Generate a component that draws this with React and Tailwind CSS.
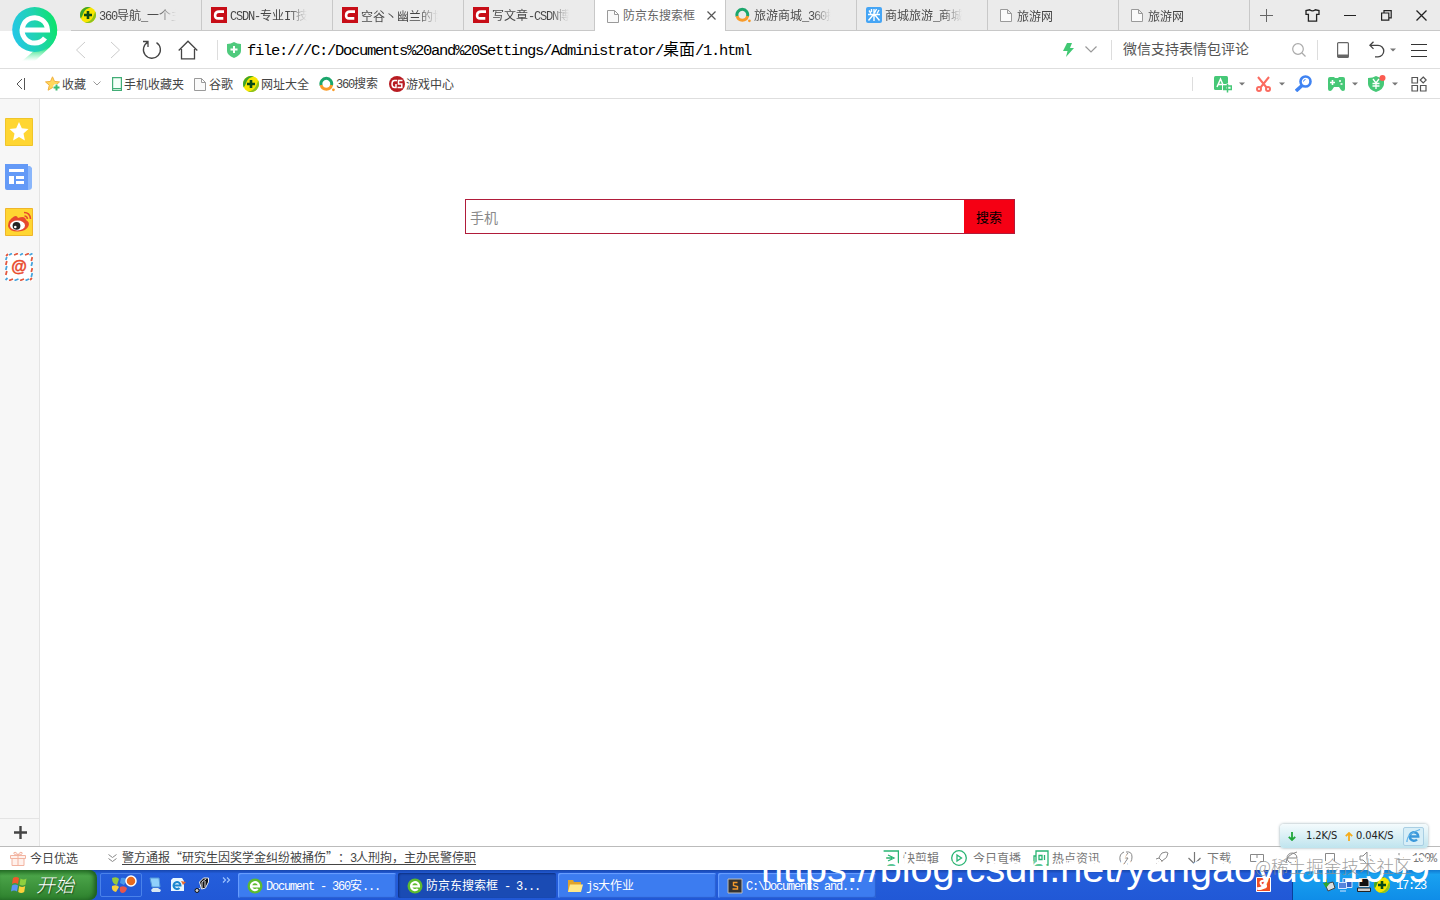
const CJK = "font-['Noto_Sans_CJK_SC','Liberation_Sans',sans-serif]";

// Chinese runs stay full width, Latin runs are tightened to half of a Chinese glyph.
function Text({ children, className = '', wide = false }) {
  const latin = wide
    ? "font-['Liberation_Mono',monospace] text-[15.5px] tracking-[-1.3px]"
    : "font-['Liberation_Mono',monospace] text-[12px] tracking-[-1.2px]";
  return (
    <span className={`whitespace-pre [text-spacing-trim:space-all] ${className}`}>
      {children.split(/([\x20-\x7e]+)/).map((part, i) =>
        i % 2 ? (
          <span key={i} className={latin}>
            {part}
          </span>
        ) : (
          part
        )
      )}
    </span>
  );
}

function Icon({ w = 16, h = 16, className = '', stroke = 'none', sw = 1, fill = 'none', children }) {
  return (
    <svg
      width={w}
      height={h}
      viewBox={`0 0 ${w} ${h}`}
      fill={fill}
      stroke={stroke}
      strokeWidth={sw}
      className={`block shrink-0 ${className}`}
    >
      {children}
    </svg>
  );
}

function NavIcon({ className }) {
  return (
    <Icon className={className}>
      <circle cx="8" cy="8" r="8" fill="#f7e600" />
      <path d="M0 8A8 8 0 0 1 11 .6Q5 1.500 3.500 6 2.500 9 .8 11.500 0 10 0 8z" fill="#3da52a" />
      <path d="M15.200 4.600A8 8 0 0 1 5 15.400Q10.500 15 12.800 10.500 14 8 15.200 4.600z" fill="#8cc21f" />
      <path d="M8 4v8M4 8h8" stroke="#0a4a18" strokeWidth="2.600" />
    </Icon>
  );
}

function CsdnIcon() {
  return (
    <Icon>
      <path d="M0 0h16v16H0z" fill="#c70d17" />
      <path d="M13 4.600H8Q4.400 4.600 4.100 8q-.2 3.400 3 3.400h5.200" stroke="#fff" strokeWidth="2.600" />
    </Icon>
  );
}

function PageIcon({ className }) {
  return (
    <Icon w={12} h={14} stroke="#9a9a9a" className={className}>
      <path d="M.5 1.500h7l4 4v8H.5zM7.500 1.500v4h4" fill="#fafafa" />
    </Icon>
  );
}

function RingIcon({ className }) {
  return (
    <Icon className={className} sw={3}>
      <path d="M2.200 9.500A5.400 5.400 0 1 1 12.400 9.500" stroke="#1ba66c" />
      <path d="M2.100 9A5.400 5.400 0 0 0 12.600 9" stroke="#f99b2a" />
      <circle cx="14.400" cy="13.800" r="1.400" fill="#f99b2a" />
    </Icon>
  );
}

function MiIcon() {
  return (
    <Icon>
      <rect width="16" height="16" rx="2" fill="#45a5f5" />
      <path d="M3 3.500l2 3M10.500 2l-2 4M8 2v12M2 7.500h12M7 8l-4.500 5.500M9 8l4.500 5.500M5.500 2v3M13 3l-2 3.500" stroke="#fff" strokeWidth="1.400" />
    </Icon>
  );
}

function BrowserE({ className }) {
  return (
    <Icon className={className}>
      <circle cx="8" cy="8" r="7.500" fill="#5dbb2f" />
      <path d="M3.800 8.400h8.200A4 4 0 1 0 10.800 11" stroke="#fff" strokeWidth="2.200" />
    </Icon>
  );
}

function Caret({ className }) {
  return (
    <Icon w={6} h={4} className={className}>
      <path d="M0 .5h6L3 3.500z" fill="#777" />
    </Icon>
  );
}

const TABS = [
  { title: '360导航_一个主页', icon: <NavIcon /> },
  { title: 'CSDN-专业IT技术', icon: <CsdnIcon /> },
  { title: '空谷丶幽兰的博', icon: <CsdnIcon /> },
  { title: '写文章-CSDN博客', icon: <CsdnIcon /> },
  { title: '防京东搜索框', icon: <PageIcon className="mr-px ml-[3px]" />, active: true },
  { title: '旅游商城_360搜', icon: <RingIcon /> },
  { title: '商城旅游_商城', icon: <MiIcon /> },
  { title: '旅游网', icon: <PageIcon className="mr-[2px] ml-[3px]" /> },
  { title: '旅游网', icon: <PageIcon className="mr-[2px] ml-[3px]" /> },
];

function TabBar() {
  return (
    <div className="flex h-[31px] bg-[#ebebeb] pl-[71px]">
      {TABS.map((tab, i) => (
        <div
          key={i}
          className={`flex h-[31px] w-[131px] shrink-0 items-center border-r border-r-[#c8c8c8] pl-[9px] ${
            tab.active ? 'bg-white' : 'border-b border-b-[#c8c8c8]'
          }`}
        >
          {tab.icon}
          <Text
            className={`ml-[3px] overflow-hidden text-[12px] leading-[18px] ${
              tab.active
                ? 'mb-px w-[74px] text-[#666]'
                : 'mt-px w-[77px] bg-linear-to-r from-[#444] from-75% to-transparent bg-clip-text text-transparent'
            }`}
          >
            {tab.title}
          </Text>
          {tab.active && (
            <Icon w={9} h={9} stroke="#555" sw={1.2} className="ml-[10px]">
              <path d="M.5.5l8 8M8.500.5l-8 8" />
            </Icon>
          )}
        </div>
      ))}
      <div className="flex grow items-center border-b border-[#c8c8c8]">
        <div className="flex w-[43px] pl-[10px]">
          <Icon w={13} h={13} stroke="#666">
            <path d="M6.500 0v13M0 6.500h13" />
          </Icon>
        </div>
        <div className="flex grow items-center justify-between pr-[13px]">
          <Icon w={15} h={13} stroke="#222" sw={1.3} className="ml-3">
            <path d="M4.700.8Q7.500 3 10.300.8L14 1.600v3.800h-2.400v6.800H3.400V5.400H1V1.600z" />
          </Icon>
          <Icon w={12} h={12} stroke="#222">
            <path d="M0 6.500h12" />
          </Icon>
          <Icon w={11} h={11} stroke="#222" sw={1.2}>
            <path d="M.6 3h7.200v7.200H.6zM3 3V.6h7.200v7.200H7.800" />
          </Icon>
          <Icon w={11} h={11} stroke="#222" sw={1.3}>
            <path d="M.5.5l10 10M10.500.5l-10 10" />
          </Icon>
        </div>
      </div>
    </div>
  );
}

function Logo() {
  return (
    <Icon w={46} h={56} className="absolute top-[6px] left-[12px]">
      <defs>
        <linearGradient id="logo" x1="0" y1="0.7" x2="1" y2="0.5">
          <stop offset="0" stopColor="#25c6ea" />
          <stop offset="0.55" stopColor="#20d3b0" />
          <stop offset="1" stopColor="#0ce36c" />
        </linearGradient>
        <linearGradient id="tail" x1="0" y1="0" x2="0" y2="1">
          <stop offset="0.55" stopColor="#12df75" />
          <stop offset="1" stopColor="#4be89a" stopOpacity="0" />
        </linearGradient>
      </defs>
      <path d="M45.200 24Q45 34 38 41L23 55H10L23 44 20 24Z" fill="url(#tail)" />
      <circle cx="22.700" cy="23.500" r="22.500" fill="url(#logo)" />
      <path d="M11 24h24.500A12.700 12.700 0 1 0 33 32" stroke="#fff" strokeWidth="5" />
    </Icon>
  );
}

function AddressBar() {
  return (
    <div className="flex h-[38px] items-center border-b border-[#dedede] bg-white">
      <Icon w={11} h={18} stroke="#ccc" className="ml-[75px]">
        <path d="M10 1L1.500 9 10 17" />
      </Icon>
      <Icon w={11} h={18} stroke="#ccc" className="ml-6">
        <path d="M1 1l8.500 8L1 17" />
      </Icon>
      <Icon w={20} h={20} stroke="#444" sw={1.3} className="ml-[21px]">
        <path d="M14.500 2.600A8.500 8.500 0 1 1 6 2.200M6 7V1.500H1" />
      </Icon>
      <Icon w={20} h={20} stroke="#444" sw={1.3} className="ml-[16px]">
        <path d="M.7 10.500L10 1.200l9.300 9.300M3.500 9v9.800h13V9" />
      </Icon>
      <div className="ml-[19px] h-5 w-px bg-[#ddd]" />
      <Icon w={14} h={16} className="ml-[9px]">
        <path d="M0 2Q4 2 7 0q3 2 7 2v7q0 4-7 7-7-3-7-7z" fill="#4fca7d" />
        <path d="M7 4v7M3.500 7.500h7" stroke="#fff" strokeWidth="2" />
      </Icon>
      <Text wide className="-mt-px ml-[6px] text-[16px] leading-6 text-black">
        file:///C:/Documents%20and%20Settings/Administrator/桌面/1.html
      </Text>
      <div className="grow" />
      <Icon w={11} h={14}>
        <path d="M4 0h5L7 5h4L3 14l1.500-6H0z" fill="#41c873" />
      </Icon>
      <Icon w={12} h={7} stroke="#999" sw={1.2} className="ml-[11px]">
        <path d="M.5.5L6 6 11.500.5" />
      </Icon>
      <div className="ml-[14px] h-5 w-px bg-[#ddd]" />
      <Text className="-mt-[3px] ml-[11px] text-[14px] leading-5 text-[#555]">微信支持表情包评论</Text>
      <Icon w={14} h={14} stroke="#aaa" sw={1.2} className="ml-[43px]">
        <path d="M10 10l3.500 3.500" />
        <circle cx="6" cy="6" r="5.300" />
      </Icon>
      <div className="ml-[11px] h-5 w-px bg-[#ddd]" />
      <Icon w={12} h={16} stroke="#666" sw={1.2} className="ml-[19px]">
        <rect x=".6" y=".6" width="10.800" height="14.800" rx="1" />
        <path d="M1 14h10" strokeWidth="3" />
      </Icon>
      <Icon w={16} h={17} stroke="#444" sw={1.3} className="ml-5">
        <path d="M4.500.7L.9 4.300l3.600 3.600M1 4.300h8a5.700 5.700 0 0 1 0 11.500H6" />
      </Icon>
      <Caret className="ml-[5px]" />
      <Icon w={16} h={14} stroke="#333" className="mr-[13px] ml-[15px]">
        <path d="M0 1.500h16M0 7.500h16M0 13.500h16" />
      </Icon>
    </div>
  );
}

function Bookmarks() {
  return (
    <div className="flex h-[30px] items-center border-b border-[#dedede] bg-white text-[12px] leading-[18px] text-[#444]">
      <Icon w={10} h={12} stroke="#555" className="ml-4">
        <path d="M6 1L1 6l5 5M8.500 0v12" />
      </Icon>
      <Icon w={16} h={16} className="ml-[19px]">
        <path d="M7.500.8l2 4.600 5 .5-3.800 3.300 1.200 5-4.400-2.600-4.400 2.600 1.200-5L.5 5.900l5-.5z" fill="#ffd75c" stroke="#f0b040" />
        <path d="M11.500 8v7M8 11.500h7" stroke="#fff" strokeWidth="4" />
        <path d="M11.500 8.500v6M8.500 11.500h6" stroke="#3cba70" strokeWidth="2" />
      </Icon>
      <Text className="ml-px">收藏</Text>
      <Icon w={8} h={5} stroke="#999" className="ml-[7px]">
        <path d="M.5.5L4 4 7.500.5" />
      </Icon>
      <Icon w={10} h={14} stroke="#42ad76" sw={1.2} className="ml-[11px]">
        <path d="M.6.6h8.800v12.800H.6zM1 11.500h8" fill="#f5fff9" />
      </Icon>
      <Text className="ml-[2px]">手机收藏夹</Text>
      <PageIcon className="ml-[10px]" />
      <Text className="ml-[3px]">谷歌</Text>
      <NavIcon className="ml-[10px]" />
      <Text className="ml-[2px]">网址大全</Text>
      <RingIcon className="ml-[10px]" />
      <Text className="ml-px">360搜索</Text>
      <Icon className="ml-[11px]">
        <circle cx="8" cy="8" r="8" fill="#b81c22" />
        <path d="M8 4.500H5.500Q3 4.500 3 8t2.500 3.500H7V8M13.500 4.500H9.500V8h3.300v3.500H8.500" stroke="#fff" strokeWidth="1.500" />
      </Icon>
      <Text className="ml-px">游戏中心</Text>
      <div className="grow" />
      <div className="h-[14px] w-px bg-[#ddd]" />
      <Icon w={18} h={18} className="ml-[21px]">
        <rect y="1" width="14" height="14" rx="1.500" fill="#46c877" />
        <path d="M3 12L6.500 4 10 12M4.500 9.500h4" stroke="#fff" strokeWidth="1.500" />
        <path d="M9 10h9v5H9zM13.500 8.500v9" stroke="#fff" strokeWidth="2" />
        <path d="M9.700 11h7.600v3.500H9.700zM13.500 9v8.500" stroke="#46c877" strokeWidth="1.500" />
      </Icon>
      <Caret className="ml-[7px]" />
      <Icon w={15} h={16} stroke="#fb6b60" sw={2} className="ml-[11px]">
        <path d="M2 1l8.500 10.500M13 1L4.500 11.500" />
        <circle cx="3" cy="13" r="2" />
        <circle cx="12" cy="13" r="2" />
      </Icon>
      <Caret className="ml-2" />
      <Icon w={17} h={17} stroke="#3f83f2" sw={2.6} className="ml-[10px]">
        <circle cx="10.500" cy="6.500" r="5" />
        <path d="M7 10.500L1 16" strokeWidth="3.500" />
        <path d="M8.500 6.500q.3-2 2-2" strokeWidth="1" />
      </Icon>
      <Icon w={17} h={14} className="ml-4">
        <path d="M2 0h4l1 1h3l1-1h4q2 0 2 2v10q0 2-2 2-1 0-2-1l-2-3H6l-2 3q-1 1-2 1-2 0-2-2V2q0-2 2-2z" fill="#46c877" />
        <path d="M4.500 3v5M2 5.500h5M11 4h2M12.500 7h2" stroke="#fff" strokeWidth="1.600" />
      </Icon>
      <Caret className="ml-[7px]" />
      <Icon w={18} h={18} className="ml-[10px]">
        <path d="M0 3q5 0 8-2 3 2 8 2v6q0 5-8 8-8-3-8-8z" fill="#46c877" />
        <path d="M5 4l3 4 3-4M8 8v6M4.500 8.500h7M4.500 11h7" stroke="#fff" strokeWidth="1.300" />
        <circle cx="14.500" cy="3" r="3" fill="#fb5b50" />
      </Icon>
      <Caret className="ml-[6px]" />
      <Icon w={16} h={16} stroke="#555" sw={1.2} className="mr-[13px] ml-[13px]">
        <path d="M1 1.500h5.500V7H1zM1 9.500h5.500V15H1zM9.500 9.500H15V15H9.500z" />
        <path d="M12.200 1l3 3-3 3-3-3z" />
      </Icon>
    </div>
  );
}

function Sidebar() {
  return (
    <div className="flex w-10 shrink-0 flex-col border-r border-[#e4e4e4] bg-[#f7f7f7]">
      <div className="flex grow flex-col gap-[17px] pt-[19px] pl-[5px]">
        <Icon w={28} h={28}>
          <path d="M.5.5h27v27H.5z" fill="#ffd632" stroke="#efc52b" />
          <path d="M14 4l2.800 6.300 6.700.7-5 4.600 1.400 6.800L14 19l-5.900 3.400 1.400-6.800-5-4.600 6.700-.7z" fill="#fff" />
        </Icon>
        <Icon w={28} h={28}>
          <path d="M21 3h4l2 2v19q0 3-4 3h-6z" fill="#8ab6fb" />
          <path d="M0 1h23v26H2q-2 0-2-2z" fill="#649af7" />
          <path d="M4 7.500h15M11 14.500h8M11 19.500h8" stroke="#fff" strokeWidth="3" />
          <path d="M4 13h5v8H4z" fill="#fff" />
        </Icon>
        <Icon w={28} h={28}>
          <path d="M.5.5h27v27H.5z" fill="#ffd632" stroke="#efb52b" />
          <path d="M3 18Q3 12 9 8.500q3-1.500 4 1.500 7-3 8 2 4 2 2.500 6-2 5-10.500 5.500Q4 23.500 3 18z" fill="#e6492d" />
          <ellipse cx="12.500" cy="17.500" rx="7.500" ry="5" fill="#fff" />
          <circle cx="11.500" cy="17.800" r="3.900" fill="#222" />
          <circle cx="10.300" cy="19" r="1.300" fill="#fff" />
          <path d="M19 4.500q6 0 6.500 6.500M19.500 8q2.500 0 3 3" stroke="#e6492d" strokeWidth="1.600" />
        </Icon>
        <Icon w={28} h={28}>
          <path d="M0 0h28v28H0z" fill="#fff" />
          <path d="M1 3l2-2M9 2l4-1.500M20 2l4-1.500M4 27.500L8 26M15 27.500l4-1.500M25 27l2-2M.8 12l1-4M.8 22l1-4M26.300 8l1-4M26.300 19l1-4" stroke="#e2583e" strokeWidth="1.800" />
          <path d="M4 2l3-1.500M15 2l3-1.500M24.500 2l3-1.500M.5 27l2-2M9.500 27.500l4-1.500M20.500 27.500l3.500-1.500M.8 7l1-3M.8 17l1-4M26.300 13l1-4M26.300 24l1-4" stroke="#46a4dc" strokeWidth="1.800" />
          <text x="14" y="19" textAnchor="middle" fontFamily="Liberation Sans" fontSize="16" fontWeight="bold" fill="#e8492c" stroke="#e8492c" strokeWidth=".4">
            @
          </text>
        </Icon>
      </div>
      <div className="flex h-[28px] items-center border-t border-[#e4e4e4] pl-[14px]">
        <Icon w={13} h={13} stroke="#444" sw={2.4}>
          <path d="M6.500 0v13M0 6.500h13" />
        </Icon>
      </div>
    </div>
  );
}

function SearchPage() {
  return (
    <div className="flex grow items-start bg-white pt-[100px] pl-[425px]">
      <div className="flex h-[35px] w-[550px] border border-[#b01c3a]">
        <div className="flex w-[498px] items-center pt-px pl-1 text-[14px] text-[#8a8a8a]">手机</div>
        <div className="flex grow items-center justify-center bg-[#f50014] text-[13px] text-black">搜索</div>
      </div>
    </div>
  );
}

function StatusBar() {
  return (
    <div className="flex h-6 items-center border-t border-[#bbb] bg-white pb-px text-[12px] leading-[18px] text-[#444]">
      <Icon w={16} h={15} stroke="#f2b3a0" className="ml-[10px]">
        <path d="M.5 4.500h15v3H.5zM2 7.500h12v7H2zM8 4.500v10M8 4Q3 4 4 1.500 6 0 8 4q2-4 4-2.500Q13 4 8 4" fill="#fff1ec" />
      </Icon>
      <Text className="ml-1">今日优选</Text>
      <Icon w={9} h={9} stroke="#888" className="ml-[30px]">
        <path d="M.5.5l4 3 4-3M.5 4.500l4 3 4-3" />
      </Icon>
      <Text className="ml-[5px] underline underline-offset-2">警方通报“研究生因奖学金纠纷被捅伤”：3人刑拘，主办民警停职</Text>
      <div className="grow" />
      <div className="flex items-center text-[#777]">
        <Icon stroke="#28b473" sw={1.3}>
          <path d="M.6 1h14.800v12.500M4 15h9M5 5l6 3-6 3M3 8h6" />
        </Icon>
        <Text className="ml-1">快剪辑</Text>
        <Icon stroke="#28b473" sw={1.3} className="ml-3">
          <circle cx="8" cy="8" r="7.300" />
          <path d="M6 5l4.500 3L6 11z" />
        </Icon>
        <Text className="ml-[6px]">今日直播</Text>
        <Icon stroke="#28b473" sw={1.3} className="ml-3">
          <path d="M3 1h12v14H3zM3 6H1v9h3M6 5.500h3v4H6zM11.500 5v5" />
        </Icon>
        <Text className="ml-[3px]">热点资讯</Text>
        <Icon w={14} h={14} stroke="#888" className="ml-[19px]">
          <path d="M5 1Q0 3 1 9q1 4 4 4M7 1q6-1 6 5 0 6-5 7M9 2L5 7h4l-4 6" />
        </Icon>
        <Icon w={14} h={14} stroke="#888" className="ml-[22px]">
          <path d="M7 2q5-2 6 0 0 5-6 8L4 7q1-3 3-5zM4 7L1 8M7 10l-1 3M4 10l-3 3" />
        </Icon>
        <Icon w={13} h={14} stroke="#777" sw={1.2} className="ml-[19px]">
          <path d="M6.500 1v12M.5 7l6 6 6-6" />
        </Icon>
        <Text className="ml-[6px]">下载</Text>
        <Icon w={14} h={14} stroke="#888" className="ml-[19px]">
          <path d="M.5 3.500h13v7H.5zM7 3v4" />
        </Icon>
        <Icon w={14} h={14} stroke="#888" className="ml-[21px]">
          <path d="M2 7h10A5 5 0 1 0 11 10M1 12Q1 4 12 1" />
        </Icon>
        <Icon w={12} h={14} stroke="#888" className="ml-[24px]">
          <path d="M2.500 2.500h9v10h-9z" />
        </Icon>
        <Icon w={14} h={14} stroke="#888" className="ml-[24px]">
          <path d="M1 5h3l4-4v12L4 9H1zM11 4q2 3 0 6" />
        </Icon>
        <Icon w={12} h={14} stroke="#888" className="ml-[20px]">
          <path d="M6 2v10M1 7h10" />
        </Icon>
        <Text className="mr-1 ml-[7px]">100%</Text>
      </div>
    </div>
  );
}

const TASKS = [
  { title: 'Document - 360安...', icon: <BrowserE /> },
  { title: '防京东搜索框 - 3...', icon: <BrowserE />, active: true },
  {
    title: 'js大作业',
    icon: (
      <Icon>
        <path d="M1 2h5l1 2h7v10H1z" fill="#e0a32b" />
        <path d="M3 6.500h13L14 14H1z" fill="#ffe88a" />
      </Icon>
    ),
  },
  {
    title: 'C:\\Documents and...',
    icon: (
      <Icon>
        <path d="M1 1h14v14H1z" fill="#333" stroke="#bbb" />
        <path d="M10.500 4.500h-4V7.500l4 1V11h-5" stroke="#f39a2c" strokeWidth="1.400" />
      </Icon>
    ),
  },
];

function Taskbar() {
  return (
    <div className="flex h-[30px] bg-linear-to-b from-[#1746ad] via-[#245edb] via-12% to-[#2158d6] text-[12px] leading-[18px] text-white">
      <div className="flex w-[97px] items-center rounded-r-lg bg-linear-to-b from-[#2b7a2b] via-[#4aa348] via-20% to-[#2d812d] pl-[11px] shadow-[inset_-3px_0_4px_#1d5c22]">
        <Icon w={18} h={18}>
          <path d="M2 2q3-2 6 0L7 8Q4 6 1 8z" fill="#f1582c" />
          <path d="M9.500 2.500q3 2 6 0l-1 6q-3 2-6 0z" fill="#8fd03f" />
          <path d="M1 9.500q3-2 6 0l-1 6q-3-2-6 0z" fill="#5b93f5" />
          <path d="M8.200 10q3 2 6 0l-1 6q-3 2-6 0z" fill="#fcd13b" />
        </Icon>
        <span className="-mt-[3px] ml-[7px] text-[19px] font-light italic text-shadow-[1px_1px_1px_#1d4d1d]">开始</span>
      </div>
      <div className="ml-[3px] flex w-[138px] items-center">
        <div className="flex h-6 w-[42px] items-center justify-center rounded-xs border border-[#4a82ea]">
          <Icon w={28} h={20} className="ml-1">
            <path d="M3 3q5-2 7 1L8 10Q3 9 3 3z" fill="#95c93d" />
            <path d="M3 11q5-2 7 1l-3 5q-5-1-4-6z" fill="#f6cf3b" />
            <path d="M12 3q4-1 6 2l-3 5-4-2z" fill="#4a97e8" />
            <path d="M11 12q4-2 7 1-1 5-5 5-3-1-2-6z" fill="#e7564c" />
            <circle cx="22" cy="6" r="5" fill="#e66a1f" stroke="#fff" strokeWidth="1.500" />
          </Icon>
        </div>
        <Icon w={14} h={16} className="ml-[6px]">
          <path d="M2 1h9l1 9H4z" fill="#8fd0fb" stroke="#5599d8" />
          <path d="M5 11h5l3 2-1 2H4l-1-2z" fill="#d9e8f2" />
        </Icon>
        <Icon className="ml-2">
          <path d="M3 1h9l2 3v10H1V3z" fill="#e8f6ff" />
          <path d="M4 8.500h6.500A3.500 3.500 0 1 0 9.500 11" stroke="#1b86cf" strokeWidth="2" />
          <path d="M11 4l5 1-3 3z" fill="#ee6b2c" />
        </Icon>
        <Icon className="ml-2">
          <path d="M5.500 5l4-4h5v4l-3 6-4 1z" fill="#111" stroke="#eee" />
          <path d="M8 5l4-3M8 5v6M11 4v6M6 11l-3 3" stroke="#ddd" />
          <circle cx="3" cy="13.500" r="2" fill="#ccc" stroke="#111" />
        </Icon>
        <Icon w={9} h={6} stroke="#9dc3ff" sw={1.2} className="-mt-[10px] ml-[12px]">
          <path d="M1 .5L3.500 3 1 5.500M5 .5L7.500 3 5 5.500" />
        </Icon>
      </div>
      {TASKS.map((task) => (
        <div
          key={task.title}
          className={`mt-[3px] mr-[2px] flex h-[25px] w-[158px] items-center rounded-xs pl-[9px] ${
            task.active
              ? 'bg-[#1a4bb4] shadow-[inset_1px_1px_2px_#0d3082]'
              : 'bg-[#3c7cf0] shadow-[inset_1px_1px_1px_#6ba0ff,inset_-1px_-1px_1px_#2a5fd0]'
          }`}
        >
          {task.icon}
          <Text className="ml-[3px]">{task.title}</Text>
        </div>
      ))}
      <div className="grow" />
      <Icon w={15} h={15} className="mt-[7px] mr-[21px]">
        <path d="M.5.5h14v14H.5z" fill="#ee4f27" stroke="#fff" />
        <path d="M11.500 4Q4 3 4.500 6t5 2q2.500 3-6 3" stroke="#fff" strokeWidth="2" />
      </Icon>
      <div className="flex w-[148px] items-center border-l border-[#0b3f9a] bg-linear-to-b from-[#1279cf] via-[#19a1f0] via-15% to-[#0f8de8] pl-[29px]">
        <Icon w={14} h={14}>
          <path d="M3 6l8-2 2 6-7 3z" fill="#d8dfe2" stroke="#444" />
          <path d="M5 0v5h3L4 10 1 5h2z" fill="#2fa532" />
        </Icon>
        <Icon w={15} h={14} className="ml-[2px]">
          <path d="M5 .5h9v9H5z" fill="#3260c5" stroke="#d5e6ff" />
          <path d="M.5 4.500h8v6h-8zM2 13h6" fill="#5584dd" stroke="#d5e6ff" />
        </Icon>
        <Icon w={14} h={14} className="ml-[4px]">
          <path d="M2 .5h10v8H2z" fill="#111" stroke="#ddd" />
          <path d="M.5 10h13v3.500H.5z" fill="#ccc" stroke="#222" />
        </Icon>
        <NavIcon className="ml-[3px]" />
        <Text className="ml-[6px]">17:23</Text>
      </div>
    </div>
  );
}

function SpeedWidget() {
  return (
    <div className="absolute top-[824px] left-[1280px] flex h-6 w-[148px] items-center rounded bg-linear-to-b from-[#f4fbfd] to-[#bfe4ee] font-['DejaVu_Sans_Condensed','DejaVu_Sans',sans-serif] text-[11px] tracking-[-0.1px] text-[#222] shadow-[0_0_3px_#8fa5ad]">
      <Icon w={8} h={9} stroke="#20a63a" sw={1.8} className="ml-2">
        <path d="M4 0v8M.8 4.800L4 8l3.200-3.200" />
      </Icon>
      <span className="ml-[10px] w-[32px] whitespace-nowrap">1.2K/S</span>
      <Icon w={8} h={9} stroke="#f5ac1c" sw={1.8} className="ml-[7px]">
        <path d="M4 9V1M.8 4.200L4 1l3.200 3.200" />
      </Icon>
      <span className="ml-[3px] w-[39px] whitespace-nowrap">0.04K/S</span>
      <div className="ml-2 flex h-[19px] w-[21px] items-center justify-center rounded-xs border border-[#a9cfe4] bg-[#d7eef7]">
        <Icon w={16} h={16}>
          <path d="M4 8.500h8.200A4.300 4.300 0 1 0 11 11.500" stroke="#3b98da" strokeWidth="2.500" />
          <path d="M1 14Q0 6 14 1.500" stroke="#61b4e8" strokeWidth="1.300" />
        </Icon>
      </div>
    </div>
  );
}

export default function App() {
  return (
    <div lang="zh-CN" className={`relative flex h-[900px] w-[1440px] flex-col overflow-hidden bg-white ${CJK}`}>
      <TabBar />
      <AddressBar />
      <Bookmarks />
      <div className="flex grow">
        <Sidebar />
        <SearchPage />
      </div>
      <StatusBar />
      <Taskbar />
      <Logo />
      <SpeedWidget />
      <div className="absolute top-[846px] left-[761px] font-['Liberation_Sans',sans-serif] text-[39.6px] leading-[45px] whitespace-nowrap text-white">
        https://blog.csdn.net/yangaoyuan1999
      </div>
      <div className="absolute top-[853px] left-[1255px] text-[17.6px] leading-[26px] font-light whitespace-nowrap text-[#8f8f8f]/85">
        @稀土掘金技术社区
      </div>
    </div>
  );
}
